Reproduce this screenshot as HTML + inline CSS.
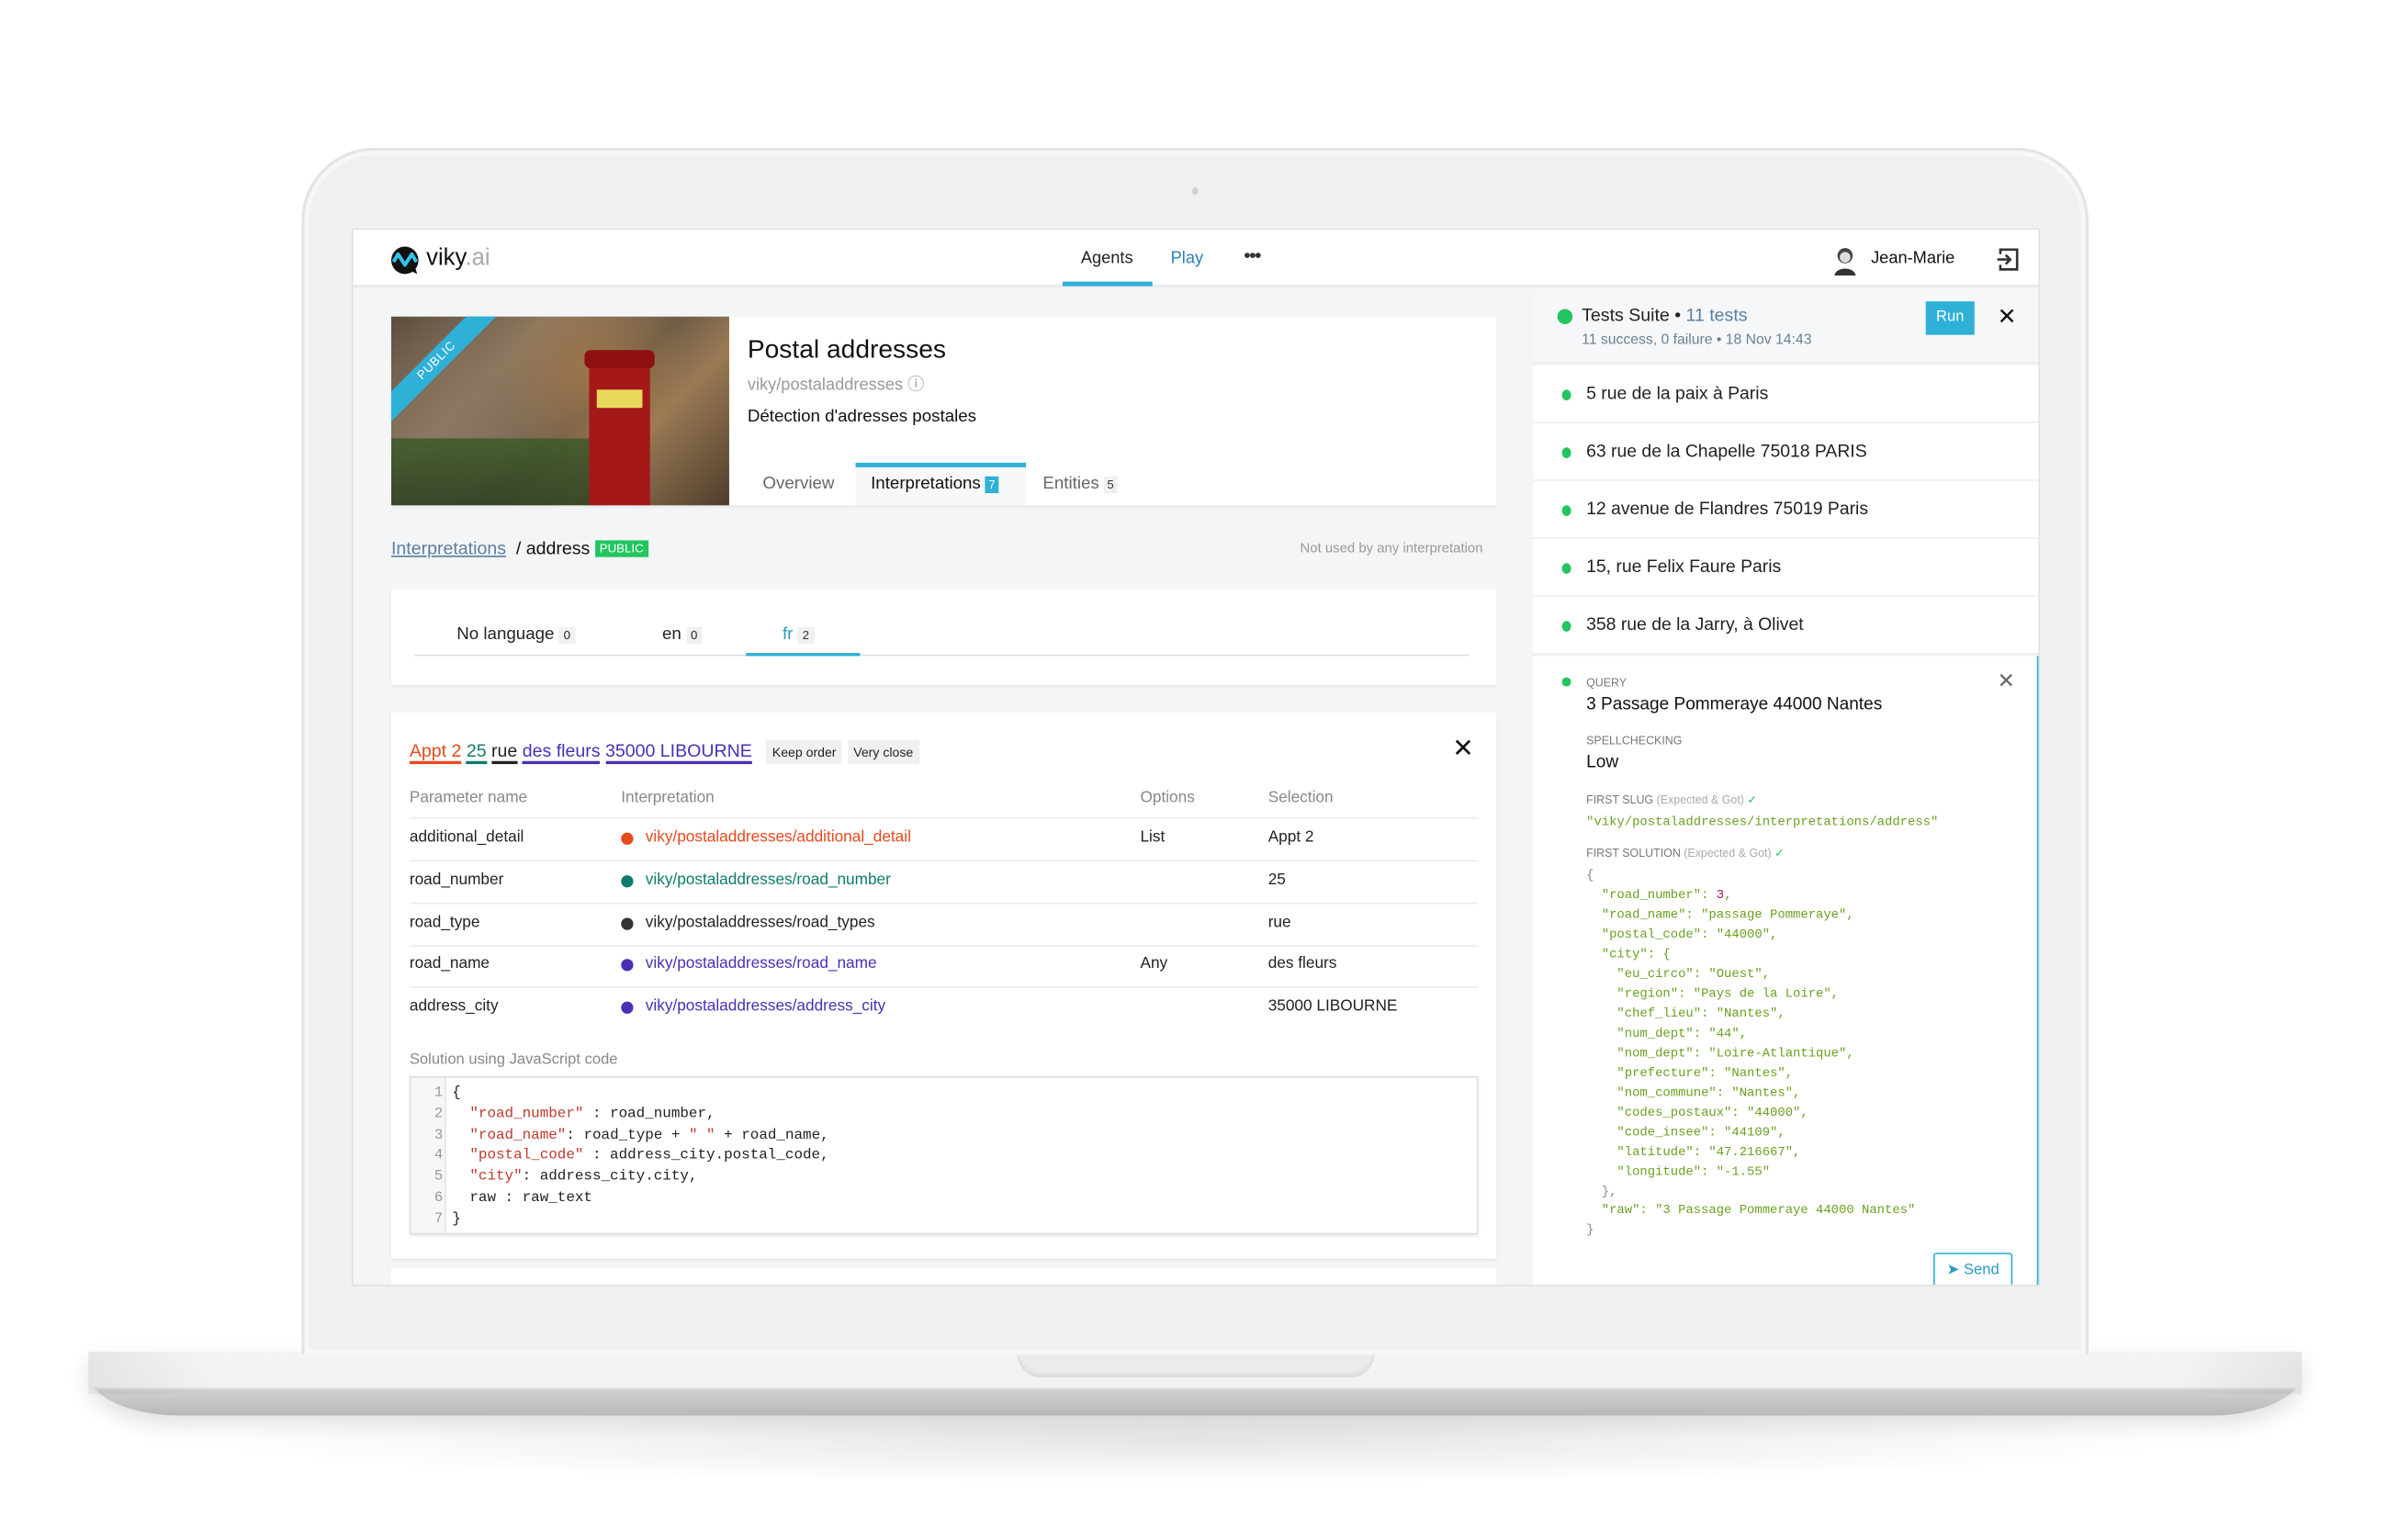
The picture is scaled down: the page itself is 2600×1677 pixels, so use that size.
<!DOCTYPE html>
<html><head><meta charset="utf-8">
<style>
*{box-sizing:border-box;margin:0;padding:0}
html,body{width:2600px;height:1677px;overflow:hidden;background:#fff;font-family:"Liberation Sans",sans-serif;color:#222}
#w{position:absolute;left:0;top:0;width:1570px;height:1012px;transform:scale(1.6575);transform-origin:0 0}
.a{position:absolute;white-space:nowrap}
.row{position:absolute;left:268px;width:702px;height:28px;border-bottom:1px solid #e9ecef;font-size:10.4px}
.row span{position:absolute;top:7px}
.dot{position:absolute;width:8px;height:8px;border-radius:50%;top:9px;left:139px}
.li{position:absolute;left:1006px;width:334px;height:38px;border-bottom:1px solid #eceff2;background:#fff;font-size:11.7px}
.li i{position:absolute;left:19px;top:16px;width:6px;height:7px;border-radius:50%;background:#22c55e}
.li span{position:absolute;left:35px;top:12px}
.j{position:absolute;left:1041px;font-family:"Liberation Mono",monospace;font-size:8.4px;color:#6aa022;white-space:pre}
.c{position:absolute;left:296px;font-family:"Liberation Mono",monospace;font-size:9.6px;white-space:pre;color:#222}
.n{position:absolute;left:276px;width:14px;text-align:right;font-family:"Liberation Mono",monospace;font-size:9.6px;color:#999}
.s{color:#c0392b}
</style></head><body><div id="w">
<div class="a" style="left:120px;top:915px;width:1330px;height:60px;border-radius:50%;background:radial-gradient(ellipse at center,rgba(0,0,0,.10),rgba(0,0,0,0) 70%)"></div>
<div class="a" style="left:58px;top:888px;width:1454px;height:42px;border-radius:0 0 60px 60px/0 0 28px 28px;background:linear-gradient(#f4f4f4 0,#f1f1f1 55%,#d0d0d0 60%,#c4c4c4 80%,#b8b8b8 100%);box-shadow:0 6px 14px rgba(0,0,0,.12)"></div>
<div class="a" style="left:58px;top:888px;width:80px;height:28px;background:linear-gradient(90deg,rgba(0,0,0,.06),rgba(0,0,0,0))"></div>
<div class="a" style="left:1432px;top:888px;width:80px;height:28px;background:linear-gradient(270deg,rgba(0,0,0,.06),rgba(0,0,0,0))"></div>
<div class="a" style="left:668px;top:888px;width:235px;height:17px;border-radius:0 0 16px 16px;background:#ebebeb;box-shadow:inset 0 -2px 3px rgba(0,0,0,.08)"></div>
<div class="a" style="left:198px;top:97px;width:1174px;height:793px;border-radius:48px 48px 0 0;background:#f0f0f0;border:2px solid #e4e4e4;border-bottom:none;box-shadow:inset 0 0 0 3px #f7f7f7"></div>
<div class="a" style="left:783px;top:123px;width:4px;height:5px;border-radius:50%;background:#cfcfcf"></div>
<div class="a" style="left:231px;top:150px;width:1109px;height:695px;background:#f3f5f7;overflow:hidden;border:1px solid #e2e2e2">
<div style="position:absolute;left:-231px;top:-150px;width:1560px;height:1006px">
 <div class="a" style="left:231px;top:150px;width:1109px;height:38px;background:#fff;border-bottom:2px solid #e8ebee"></div>
 <svg class="a" style="left:255px;top:160px" width="20" height="20" viewBox="0 0 20 20"><path d="M10 1a9 9 0 1 0 5 16.5l3 1.5-1-3.5A9 9 0 0 0 10 1z" fill="#111"/><path d="M2.5 11l3-5 4.5 7 4.5-7 3 5" stroke="#33c4ea" stroke-width="2.4" fill="none" stroke-linejoin="round"/></svg>
 <div class="a" style="left:279px;top:160px;font-size:15.5px;color:#111">viky<span style="color:#aaa">.ai</span></div>
 <div class="a" style="left:709px;top:163px;font-size:11px;color:#222">Agents</div>
 <div class="a" style="left:697px;top:184px;width:59px;height:3px;background:#2fb0d7"></div>
 <div class="a" style="left:768px;top:163px;font-size:11px;color:#2b7fb5">Play</div>
 <div class="a" style="left:816px;top:159px;font-size:13px;color:#333;letter-spacing:-1px">•••</div>
 <svg class="a" style="left:1202px;top:160px" width="18" height="20" viewBox="0 0 18 20"><circle cx="9" cy="7" r="5" fill="#444"/><circle cx="9" cy="8" r="3.5" fill="#ddd"/><path d="M2 20c1-6 13-6 14 0z" fill="#333"/></svg>
 <div class="a" style="left:1228px;top:163px;font-size:11px;color:#111">Jean-Marie</div>
 <svg class="a" style="left:1310px;top:161px" width="16" height="17" viewBox="0 0 16 17"><path d="M3 5V2h11v13H3v-3" stroke="#333" stroke-width="1.6" fill="none"/><path d="M1 8.5h8M6.5 5.5l3 3-3 3" stroke="#333" stroke-width="1.6" fill="none"/></svg>

 <div class="a" style="left:256px;top:207px;width:726px;height:124px;background:#fff;box-shadow:0 1px 2px rgba(0,0,0,.06)"></div>
 <div class="a" style="left:256px;top:207px;width:222px;height:124px;overflow:hidden;background:linear-gradient(135deg,#5a4b3c,#8a7860 30%,#6e5d48 55%,#9a7a55 70%,#4e3d2c);">
  <div class="a" style="left:0;top:0;width:222px;height:124px;background:radial-gradient(circle at 60% 30%,rgba(190,130,70,.55),transparent 40%),radial-gradient(circle at 20% 60%,rgba(140,120,100,.6),transparent 45%)"></div>
  <div class="a" style="left:0;top:80px;width:140px;height:44px;background:linear-gradient(#3f5a2a,#2c4020);opacity:.85"></div>
  <div class="a" style="left:130px;top:24px;width:40px;height:100px;background:#a41818;border-radius:6px 6px 0 0"></div>
  <div class="a" style="left:127px;top:22px;width:46px;height:12px;background:#8e1010;border-radius:4px"></div>
  <div class="a" style="left:135px;top:48px;width:30px;height:12px;background:#e8d85a"></div>
  <div class="a" style="left:-30px;top:22px;width:120px;height:14px;background:#2fb0d7;transform:rotate(-45deg);color:#fff;font-size:8px;text-align:center;line-height:14px;letter-spacing:.5px">PUBLIC</div>
 </div>
 <div class="a" style="left:490px;top:219px;font-size:17px;color:#111">Postal addresses</div>
 <div class="a" style="left:490px;top:243px;font-size:11px;color:#999">viky/postaladdresses ⓘ</div>
 <div class="a" style="left:490px;top:267px;font-size:11.3px;color:#111">Détection d'adresses postales</div>
 <div class="a" style="left:500px;top:311px;font-size:11.3px;color:#666">Overview</div>
 <div class="a" style="left:561px;top:303px;width:112px;height:28px;background:#f7f8f9;border-top:3px solid #2fb0d7"></div>
 <div class="a" style="left:571px;top:311px;font-size:11.3px;color:#111">Interpretations <span style="background:#2fb0d7;color:#fff;font-size:8px;padding:1px 2px">7</span></div>
 <div class="a" style="left:684px;top:311px;font-size:11.3px;color:#666">Entities <span style="background:#eef0f2;color:#333;font-size:8px;padding:1px 2px">5</span></div>

 <div class="a" style="left:256px;top:352px;font-size:11.8px;color:#5a7fa0;text-decoration:underline">Interpretations</div>
 <div class="a" style="left:338px;top:352px;font-size:11.8px;color:#111">/ address <span style="background:#22c55e;color:#fff;font-size:8px;padding:1px 3px;vertical-align:1px">PUBLIC</span></div>
 <div class="a" style="left:853px;top:354px;font-size:9px;color:#999">Not used by any interpretation</div>

 <div class="a" style="left:256px;top:386px;width:726px;height:63px;background:#fff;box-shadow:0 1px 2px rgba(0,0,0,.06)"></div>
 <div class="a" style="left:271px;top:429px;width:693px;height:1px;background:#dde1e5"></div>
 <div class="a" style="left:489px;top:428px;width:75px;height:2px;background:#2fb0d7"></div>
 <div class="a" style="left:299px;top:410px;font-size:11.3px;color:#222">No language <span style="background:#eef0f2;font-size:8px;padding:1px 3px">0</span></div>
 <div class="a" style="left:434px;top:410px;font-size:11.3px;color:#222">en <span style="background:#eef0f2;font-size:8px;padding:1px 3px">0</span></div>
 <div class="a" style="left:513px;top:410px;font-size:11.3px;color:#2b9ac5">fr <span style="background:#eef0f2;color:#333;font-size:8px;padding:1px 3px">2</span></div>

 <div class="a" style="left:256px;top:467px;width:726px;height:359px;background:#fff;box-shadow:0 1px 2px rgba(0,0,0,.08)"></div>
 <div class="a" style="left:268px;top:485px;font-size:11.8px">
  <span style="color:#e8491d;border-bottom:2px solid #e8491d">Appt 2</span> <span style="color:#0f7b6c;border-bottom:2px solid #0f7b6c">25</span> <span style="border-bottom:2px solid #222">rue</span> <span style="color:#4b2fb5;border-bottom:2px solid #4b2fb5">des fleurs</span> <span style="color:#4b2fb5;border-bottom:2px solid #4b2fb5">35000 LIBOURNE</span>
  <span style="background:#eef0f2;font-size:8.5px;padding:3px 4px;margin-left:6px">Keep order</span> <span style="background:#eef0f2;font-size:8.5px;padding:3px 4px">Very close</span></div>
 <div class="a" style="left:953px;top:481px;font-size:17px;color:#111">✕</div>
 <div class="row" style="top:513px;height:24px;color:#888"><span style="left:0;top:5px">Parameter name</span><span style="left:139px;top:5px">Interpretation</span><span style="left:480px;top:5px">Options</span><span style="left:564px;top:5px">Selection</span></div>
 <div class="row" style="top:537px"><span style="left:0">additional_detail</span><i class="dot" style="background:#e8491d"></i><span style="left:155px;color:#e8491d">viky/postaladdresses/additional_detail</span><span style="left:480px">List</span><span style="left:564px">Appt 2</span></div>
 <div class="row" style="top:565px"><span style="left:0">road_number</span><i class="dot" style="background:#0f7b6c"></i><span style="left:155px;color:#0f7b6c">viky/postaladdresses/road_number</span><span style="left:564px">25</span></div>
 <div class="row" style="top:593px"><span style="left:0">road_type</span><i class="dot" style="background:#333"></i><span style="left:155px">viky/postaladdresses/road_types</span><span style="left:564px">rue</span></div>
 <div class="row" style="top:620px"><span style="left:0">road_name</span><i class="dot" style="background:#4b2fb5"></i><span style="left:155px;color:#4b2fb5">viky/postaladdresses/road_name</span><span style="left:480px">Any</span><span style="left:564px">des fleurs</span></div>
 <div class="row" style="top:648px;border:none"><span style="left:0">address_city</span><i class="dot" style="background:#4b2fb5"></i><span style="left:155px;color:#4b2fb5">viky/postaladdresses/address_city</span><span style="left:564px">35000 LIBOURNE</span></div>
 <div class="a" style="left:268px;top:690px;font-size:10px;color:#888">Solution using JavaScript code</div>
 <div class="a" style="left:268px;top:706px;width:702px;height:104px;border:1px solid #dcdfe3;box-shadow:0 1px 2px rgba(0,0,0,.1)"></div>
 <div class="a" style="left:269px;top:707px;width:23px;height:102px;background:#f7f7f7;border-right:1px solid #e5e5e5"></div>
 <div class="n" style="top:711px">1</div><div class="n" style="top:725px">2</div><div class="n" style="top:739px">3</div><div class="n" style="top:752px">4</div><div class="n" style="top:766px">5</div><div class="n" style="top:780px">6</div><div class="n" style="top:794px">7</div>
 <div class="c" style="top:711px">{</div>
 <div class="c" style="top:725px">  <span class="s">"road_number"</span> : road_number,</div>
 <div class="c" style="top:739px">  <span class="s">"road_name"</span>: road_type + <span class="s">" "</span> + road_name,</div>
 <div class="c" style="top:752px">  <span class="s">"postal_code"</span> : address_city.postal_code,</div>
 <div class="c" style="top:766px">  <span class="s">"city"</span>: address_city.city,</div>
 <div class="c" style="top:780px">  raw : raw_text</div>
 <div class="c" style="top:794px">}</div>
 <div class="a" style="left:256px;top:832px;width:726px;height:20px;background:#fff"></div>

 <div class="a" style="left:1006px;top:188px;width:334px;height:660px;background:#f3f5f7;border-left:1px solid #e3e6e9"></div>
 <div class="a" style="left:1006px;top:188px;width:334px;height:50px;background:#f5f7f9;border-bottom:1px solid #e6e9ec"></div>
 <div class="a" style="left:1022px;top:202px;width:10px;height:10px;border-radius:50%;background:#22c55e"></div>
 <div class="a" style="left:1038px;top:199px;font-size:11.8px;color:#222">Tests Suite • <span style="color:#5a7fa0">11 tests</span></div>
 <div class="a" style="left:1038px;top:217px;font-size:9.5px;color:#6b7f90">11 success, 0 failure • 18 Nov 14:43</div>
 <div class="a" style="left:1264px;top:197px;width:32px;height:22px;background:#2fb0d7;color:#fff;font-size:10px;text-align:center;line-height:22px">Run</div>
 <div class="a" style="left:1311px;top:198px;font-size:15px;color:#111">✕</div>
 <div class="li" style="top:239px"><i></i><span>5 rue de la paix à Paris</span></div>
 <div class="li" style="top:277px"><i></i><span>63 rue de la Chapelle 75018 PARIS</span></div>
 <div class="li" style="top:315px"><i></i><span>12 avenue de Flandres 75019 Paris</span></div>
 <div class="li" style="top:353px"><i></i><span>15, rue Felix Faure Paris</span></div>
 <div class="li" style="top:391px"><i></i><span>358 rue de la Jarry, à Olivet</span></div>
 <div class="a" style="left:1006px;top:430px;width:334px;height:420px;background:#fff;border-right:3px solid #2fb0d7"></div>
 <div class="a" style="left:1025px;top:444px;width:6px;height:6px;border-radius:50%;background:#22c55e"></div>
 <div class="a" style="left:1041px;top:443px;font-size:7.5px;color:#777">QUERY</div>
 <div class="a" style="left:1311px;top:438px;font-size:14px;color:#666">✕</div>
 <div class="a" style="left:1041px;top:456px;font-size:11.5px;color:#111">3 Passage Pommeraye 44000 Nantes</div>
 <div class="a" style="left:1041px;top:481px;font-size:7.5px;color:#777">SPELLCHECKING</div>
 <div class="a" style="left:1041px;top:494px;font-size:11.5px;color:#111">Low</div>
 <div class="a" style="left:1041px;top:520px;font-size:7.5px;color:#777">FIRST SLUG <span style="color:#aaa">(Expected &amp; Got)</span> <span style="color:#22c55e">✓</span></div>
 <div class="j" style="top:534px">"viky/postaladdresses/interpretations/address"</div>
 <div class="a" style="left:1041px;top:555px;font-size:7.5px;color:#777">FIRST SOLUTION <span style="color:#aaa">(Expected &amp; Got)</span> <span style="color:#22c55e">✓</span></div>
 <div class="j" style="top:569px;color:#888">{</div>
 <div class="j" style="top:582px">  "road_number": <span style="color:#a0195a">3</span>,</div>
 <div class="j" style="top:595px">  "road_name": "passage Pommeraye",</div>
 <div class="j" style="top:608px">  "postal_code": "44000",</div>
 <div class="j" style="top:621px">  "city": {</div>
 <div class="j" style="top:634px">    "eu_circo": "Ouest",</div>
 <div class="j" style="top:647px">    "region": "Pays de la Loire",</div>
 <div class="j" style="top:660px">    "chef_lieu": "Nantes",</div>
 <div class="j" style="top:673px">    "num_dept": "44",</div>
 <div class="j" style="top:686px">    "nom_dept": "Loire-Atlantique",</div>
 <div class="j" style="top:699px">    "prefecture": "Nantes",</div>
 <div class="j" style="top:712px">    "nom_commune": "Nantes",</div>
 <div class="j" style="top:725px">    "codes_postaux": "44000",</div>
 <div class="j" style="top:738px">    "code_insee": "44109",</div>
 <div class="j" style="top:751px">    "latitude": "47.216667",</div>
 <div class="j" style="top:764px">    "longitude": "-1.55"</div>
 <div class="j" style="top:777px;color:#888">  },</div>
 <div class="j" style="top:789px">  "raw": "3 Passage Pommeraye 44000 Nantes"</div>
 <div class="j" style="top:802px;color:#888">}</div>
 <div class="a" style="left:1269px;top:822px;width:52px;height:24px;border:1px solid #2fb0d7;border-radius:2px;color:#2b9ac5;font-size:10px;line-height:21px;text-align:center">➤ Send</div>
</div>
</div>
</div></body></html>
